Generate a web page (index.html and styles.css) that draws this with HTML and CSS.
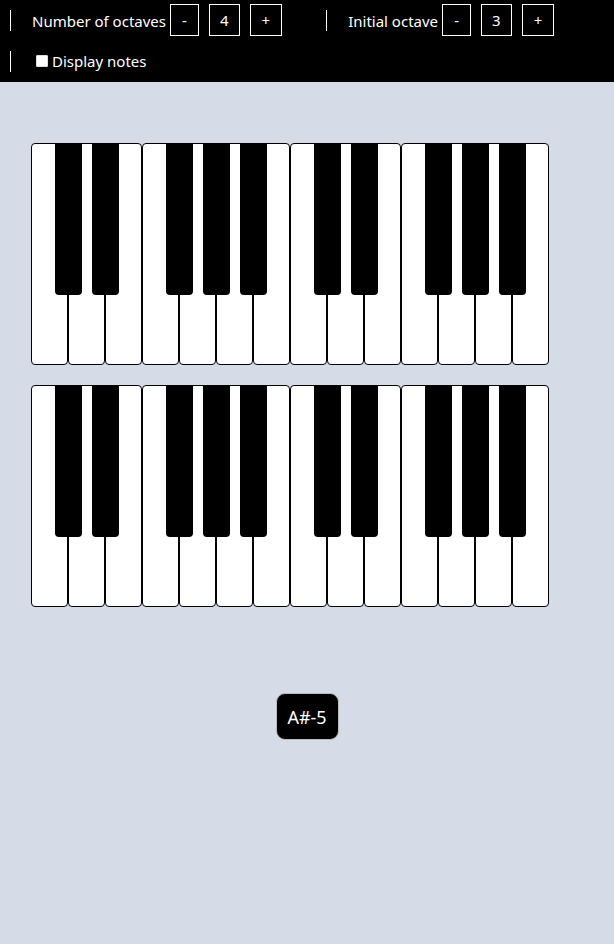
FILE: index.html
```html
<!DOCTYPE html>
<html lang="en">
<head>
<meta charset="utf-8">
<title>Piano</title>
<link rel="stylesheet" href="styles.css">
</head>
<body>
<header class="toolbar">
  <div class="group">
    <span class="label">Number of octaves</span>
    <button class="btn">-</button>
    <span class="value">4</span>
    <button class="btn">+</button>
  </div>
  <div class="group">
    <span class="label">Initial octave</span>
    <button class="btn">-</button>
    <span class="value">3</span>
    <button class="btn">+</button>
  </div>
  <div class="group">
    <label class="check"><input type="checkbox" class="box"><span>Display notes</span></label>
  </div>
</header>
<main class="stage">
  <div class="piano">
    <div class="row">
      <div class="octave">
        <div class="white"><div class="black"></div></div>
        <div class="white"><div class="black"></div></div>
        <div class="white"></div>
        <div class="white"><div class="black"></div></div>
        <div class="white"><div class="black"></div></div>
        <div class="white"><div class="black"></div></div>
        <div class="white"></div>
      </div>
      <div class="octave">
        <div class="white"><div class="black"></div></div>
        <div class="white"><div class="black"></div></div>
        <div class="white"></div>
        <div class="white"><div class="black"></div></div>
        <div class="white"><div class="black"></div></div>
        <div class="white"><div class="black"></div></div>
        <div class="white"></div>
      </div>
    </div>
    <div class="row">
      <div class="octave">
        <div class="white"><div class="black"></div></div>
        <div class="white"><div class="black"></div></div>
        <div class="white"></div>
        <div class="white"><div class="black"></div></div>
        <div class="white"><div class="black"></div></div>
        <div class="white"><div class="black"></div></div>
        <div class="white"></div>
      </div>
      <div class="octave">
        <div class="white"><div class="black"></div></div>
        <div class="white"><div class="black"></div></div>
        <div class="white"></div>
        <div class="white"><div class="black"></div></div>
        <div class="white"><div class="black"></div></div>
        <div class="white"><div class="black"></div></div>
        <div class="white"></div>
      </div>
    </div>
  </div>
  <div class="note-wrap">
    <div class="note">A#-5</div>
  </div>
</main>
</body>
</html>
```

FILE: styles.css
```css
* { box-sizing: border-box; }

html, body {
  margin: 0;
  padding: 0;
}

body {
  background: #d5dce7;
  min-height: 944px;
  font-family: "Noto Sans", "Open Sans", sans-serif;
  font-size: 15px;
  color: #fff;
}

.toolbar {
  background: #000;
  height: 82px;
  padding: 4px 0 5px 10px;
  display: flex;
  flex-wrap: wrap;
  column-gap: 44px;
  row-gap: 9px;
  align-content: flex-start;
}

.group {
  display: flex;
  align-items: center;
  height: 32px;
}

.group::before {
  content: "";
  width: 1px;
  height: 21px;
  background: #fff;
  margin-right: 21px;
}

.label {
  margin-right: 4px;
  line-height: 20px;
  padding-top: 1px;
}

.btn {
  font: inherit;
  font-size: 15px;
  color: #fff;
  background: #000;
  border: 1px solid #fff;
  height: 32px;
  min-width: 29px;
  padding: 0 11px;
  margin: 0;
  cursor: pointer;
}

.value {
  height: 32px;
  min-width: 30px;
  padding: 0 10px;
  border: 1px solid #fff;
  display: flex;
  align-items: center;
  justify-content: center;
  margin: 0 10px;
}

.check {
  display: flex;
  align-items: center;
}

.box {
  appearance: none;
  -webkit-appearance: none;
  width: 12px;
  height: 12px;
  margin: 0 4px 0 4px;
  background: #fff;
  border: 1px solid #ddd;
  border-radius: 1px;
}

.stage {
  padding: 61px 0 0 31px;
}

.piano {
  display: flex;
  flex-direction: column;
  gap: 20px;
}

.row {
  display: flex;
}

.octave {
  display: flex;
}

.white {
  position: relative;
  width: 37px;
  height: 222px;
  background: #fff;
  border: 1px solid #000;
  border-radius: 4px;
}

.black {
  position: absolute;
  z-index: 1;
  top: -1px;
  left: 23px;
  width: 27px;
  height: 152px;
  background: #000;
  border-radius: 0 0 4px 4px;
}

.note-wrap {
  display: flex;
  justify-content: center;
  margin-top: 86px;
  padding-right: 31px;
}

.note {
  height: 47px;
  padding: 0 10px;
  min-width: 63px;
  background: #000;
  border: 1px solid #bbb;
  border-radius: 9px;
  display: flex;
  align-items: center;
  justify-content: center;
  font-size: 18px;
  color: #fff;
}
```
